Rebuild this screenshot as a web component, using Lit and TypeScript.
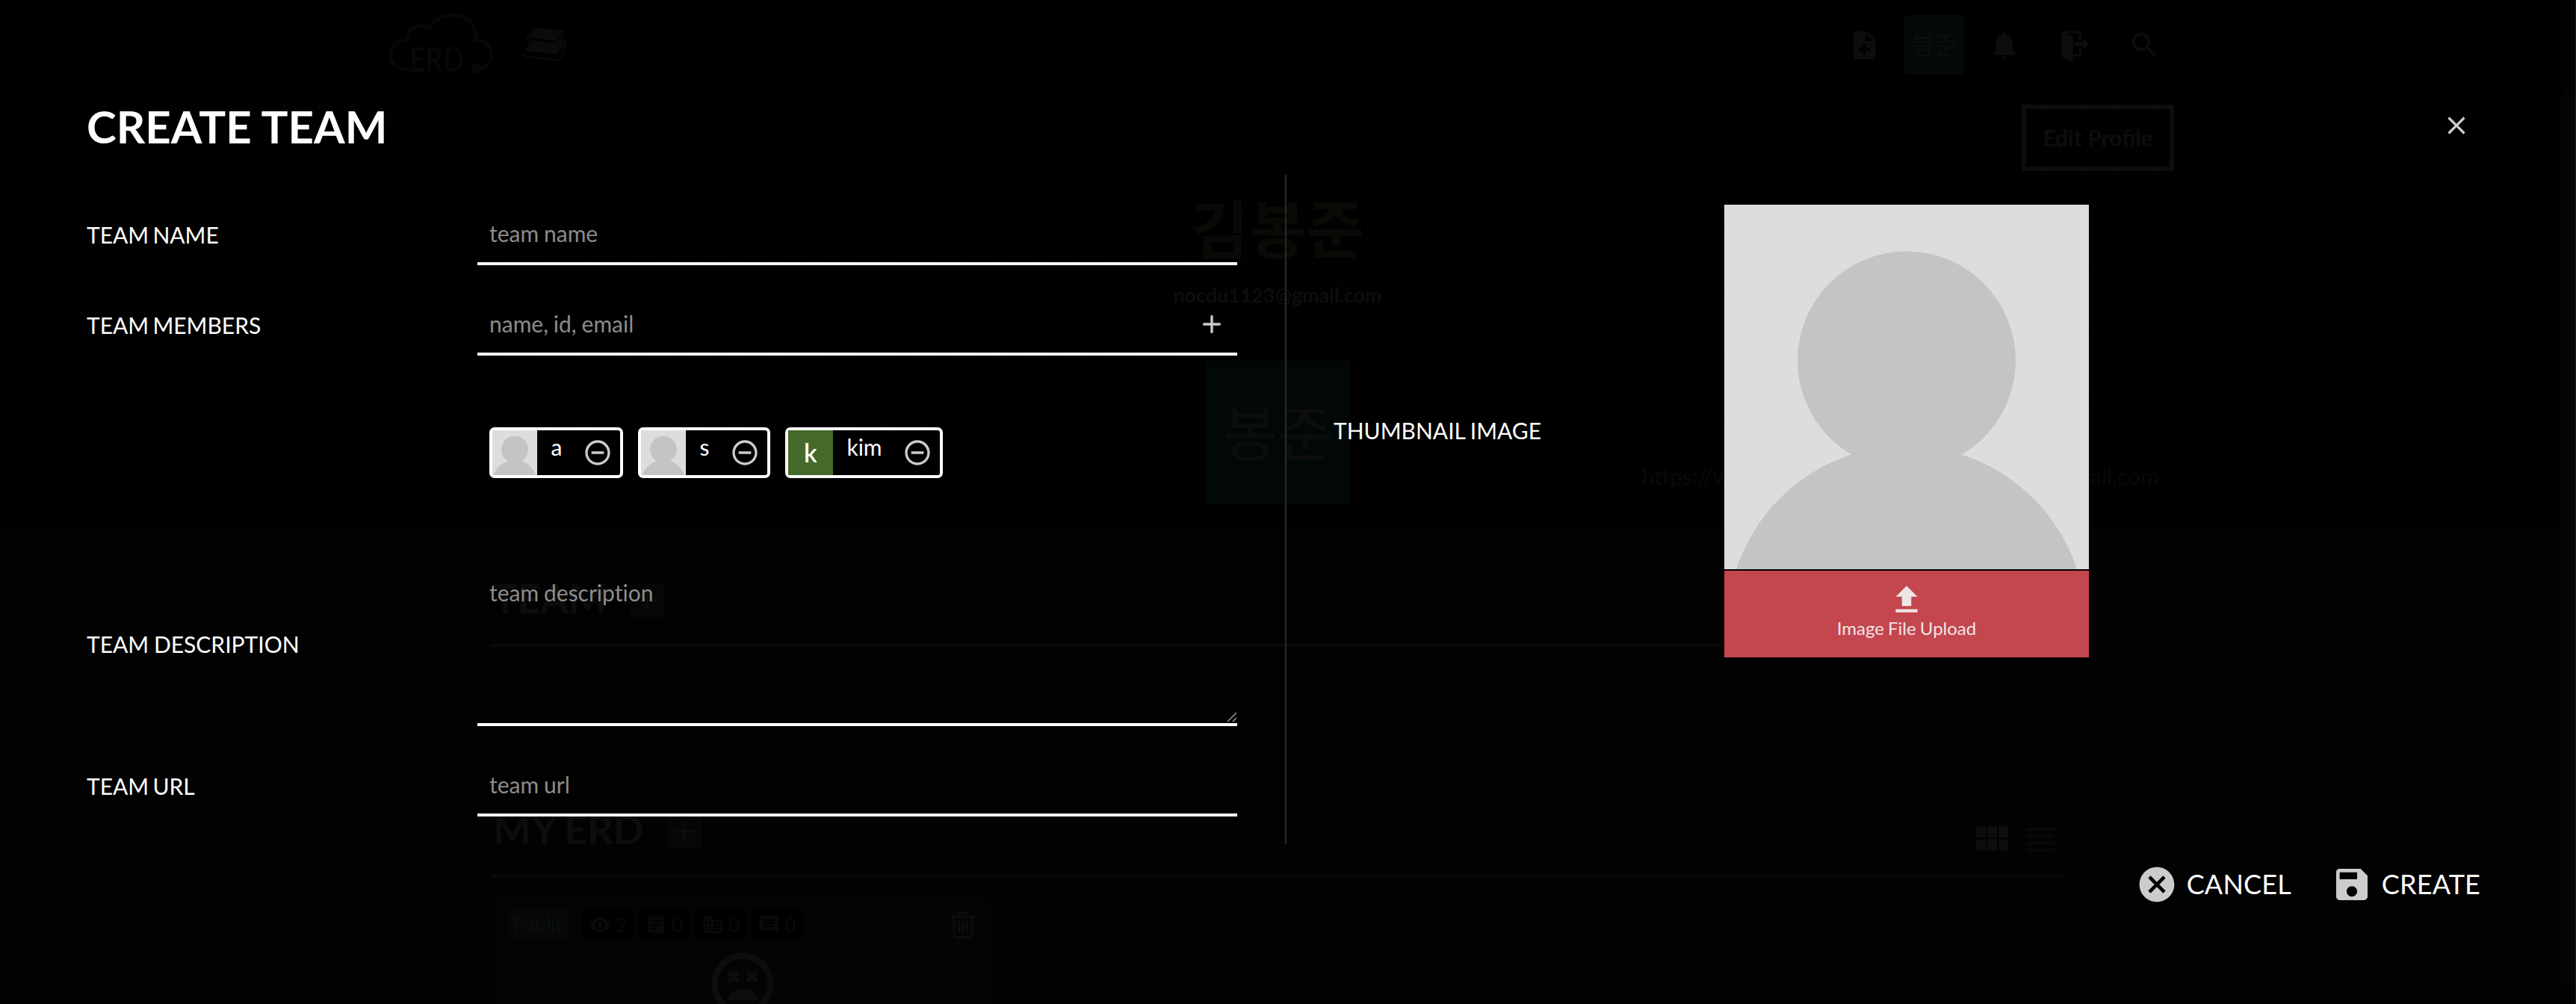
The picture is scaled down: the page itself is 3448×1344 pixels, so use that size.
import { LitElement, html, css, svg } from "lit";
import { customElement, property } from "lit/decorators.js";

const PATHS: Record<string, string> = {
  noteAdd: "M14 2H6c-1.1 0-1.99.9-1.99 2L4 20c0 1.1.89 2 1.99 2H18c1.1 0 2-.9 2-2V8l-6-6zm2 14h-3v3h-2v-3H8v-2h3v-3h2v3h3v2zm-3-7V3.5L18.5 9H13z",
  bell: "M12 22c1.1 0 2-.9 2-2h-4c0 1.1.89 2 2 2zm6-6v-5c0-3.07-1.64-5.64-4.5-6.32V4c0-.83-.67-1.5-1.5-1.5s-1.5.67-1.5 1.5v.68C7.63 5.36 6 7.92 6 11v5l-2 2v1h16v-1l-2-2z",
  exit: "M3 2h14v6h-1.7V3.600H6L11 5.500V18.500H15.300V13.500H17V20H11V24L3 20.300ZM12 9.800h6.500V7L22.300 11.200L18.500 15.400V12.500H12Z",
  search: "M15.5 14h-.79l-.28-.27C15.41 12.59 16 11.11 16 9.500 16 5.910 13.090 3 9.500 3S3 5.910 3 9.500 5.910 16 9.500 16c1.610 0 3.090-.59 4.230-1.570l.27.28v.79l5 4.990L20.490 19l-4.990-5zm-6 0C7.010 14 5 11.990 5 9.500S7.010 5 9.500 5 14 7.010 14 9.500 11.990 14 9.500 14z",
  add: "M19 13h-6v6h-2v-6H5v-2h6V5h2v6h6v2z",
  close: "M19 6.41L17.59 5 12 10.59 6.41 5 5 6.41 10.59 12 5 17.59 6.41 19 12 13.41 17.59 19 19 17.59 13.41 12z",
  minus: "M7 11v2h10v-2H7zm5-9C6.48 2 2 6.48 2 12s4.480 10 10 10 10-4.480 10-10S17.520 2 12 2zm0 18c-4.410 0-8-3.590-8-8s3.590-8 8-8 8 3.590 8 8-3.590 8-8 8z",
  cancel: "M12 2C6.470 2 2 6.470 2 12s4.470 10 10 10 10-4.470 10-10S17.530 2 12 2zm5 13.590L15.590 17 12 13.410 8.410 17 7 15.590 10.590 12 7 8.410 8.410 7 12 10.590 15.590 7 17 8.410 13.410 12 17 15.590z",
  save: "M17 3H5c-1.11 0-2 .9-2 2v14c0 1.1.89 2 2 2h14c1.1 0 2-.9 2-2V7l-4-4zm-5 16c-1.660 0-3-1.340-3-3s1.340-3 3-3 3 1.340 3 3-1.340 3-3 3zm3-10H5V5h10v4z",
  upload: "M9 16h6v-6h4l-7-7-7 7h4zm-4 2h14v2H5z",
  grid: "M4 11h5V5H4v6zm0 7h5v-6H4v6zm6 0h5v-6h-5v6zm6 0h5v-6h-5v6zm-6-7h5V5h-5v6zm6-6v6h5V5h-5z",
  list: "M4 15h16v-2H4v2zm0 4h16v-2H4v2zm0-8h16V9H4v2zm0-6v2h16V5H4z",
  eye: "M12 4.500C7 4.500 2.730 7.610 1 12c1.730 4.390 6 7.500 11 7.500s9.270-3.110 11-7.500c-1.730-4.390-6-7.500-11-7.500zM12 17c-2.760 0-5-2.240-5-5s2.240-5 5-5 5 2.240 5 5-2.240 5-5 5zm0-8c-1.660 0-3 1.340-3 3s1.340 3 3 3 3-1.340 3-3-1.340-3-3-3z",
  clipboard: "M19 3h-4.180C14.400 1.840 13.300 1 12 1c-1.300 0-2.400.84-2.820 2H5c-1.100 0-2 .9-2 2v14c0 1.100.9 2 2 2h14c1.100 0 2-.9 2-2V5c0-1.100-.9-2-2-2zm-7 0c.55 0 1 .45 1 1s-.45 1-1 1-1-.45-1-1 .45-1 1-1zm2 14H7v-2h7v2zm3-4H7v-2h10v2zm0-4H7V7h10v2z",
  building: "M12 7V3H2v18h20V7H12zM6 19H4v-2h2v2zm0-4H4v-2h2v2zm0-4H4V9h2v2zm0-4H4V5h2v2zm4 12H8v-2h2v2zm0-4H8v-2h2v2zm0-4H8V9h2v2zm0-4H8V5h2v2zm10 12h-8v-2h2v-2h-2v-2h2v-2h-2V9h8v10zm-2-8h-2v2h2v-2zm0 4h-2v2h2v-2z",
  comment: "M22 4c0-1.100-.9-2-2-2H4c-1.100 0-2 .9-2 2v12c0 1.100.9 2 2 2h14l4 4V4zm-4 10H6v-2h12v2zm0-3H6V9h12v2zm0-3H6V6h12v2z",
};

@customElement("ui-icon")
class UiIcon extends LitElement {
  @property() name = "";
  static styles = css`
    :host { display: block; flex: none; width: 40px; height: 40px; }
    .glyph { display: block; width: 100%; height: 100%; fill: currentColor; }
  `;
  render() {
    return html`<svg class="glyph" viewBox="0 0 24 24">${svg`<path d=${PATHS[this.name] ?? ""}></path>`}</svg>`;
  }
}

@customElement("ui-silhouette")
class UiSilhouette extends LitElement {
  static styles = css`
    :host { display: block; flex: none; }
    .pic { display: block; width: 100%; height: 100%; background: #dddddd; fill: #c4c4c4; }
  `;
  render() {
    return html`<svg class="pic" viewBox="0 0 488 488">
      <circle cx="244" cy="208.500" r="146"></circle><circle cx="244" cy="563" r="240"></circle>
    </svg>`;
  }
}

@customElement("profile-page")
class ProfilePage extends LitElement {
  static styles = css`
    :host { display: flex; height: 1344px; background: #020202; color: #0d0d0d; }
    .main { flex: 1; min-width: 0; }
    .nav { height: 120px; background: #000; display: flex; align-items: center; padding: 0 511px 0 520px; }
    .cloud { width: 142px; height: 84px; margin-right: 38px; color: #07070b; overflow: visible; }
    .books { width: 60px; height: 50px; color: #0b0b0b; }
    .tools { margin-left: auto; display: flex; align-items: center; }
    .tool { width: 93.75px; display: flex; justify-content: center; }
    .tool ui-icon { width: 45px; height: 45px; }
    .me { width: 80px; height: 80px; border-radius: 6px; background: #030909; display: flex; align-items: center; justify-content: center; font-size: 33px; line-height: 40px; }
    .hero { height: 584px; background: #000; display: grid; grid-template-rows: 456px 128px; }
    .stripes { background: repeating-linear-gradient(120deg, #000 0 22px, #010101 22px 43.500px); grid-area: 1 / 1; }
    .person { grid-area: 1 / 1 / 3 / 2; width: 2252px; padding: 20px 0 0 658px; box-sizing: content-box; }
    .edit { display: block; box-sizing: border-box; width: 204px; height: 89px; border: 6px solid #0d0d0d; margin-left: auto; font-weight: 700; font-size: 30px; line-height: 76px; text-align: center; }
    .center { width: 400px; margin-left: 852px; text-align: center; }
    .name { font-size: 84px; font-weight: 700; line-height: 100px; margin-top: 28px; color: #0b0906; }
    .mail { font-size: 26.800px; font-weight: 700; line-height: 36px; margin-top: 20px; }
    .mid { display: flex; align-items: flex-start; margin-top: 58px; padding-left: 944px; }
    .frame { padding: 12px; background: #010101; }
    .big { width: 192px; height: 192px; background: #020808; display: flex; align-items: center; justify-content: center; font-size: 80px; line-height: 90px; }
    .link { width: 692px; margin: 148px 0 0 380px; display: flex; justify-content: space-between; font-size: 30px; line-height: 36px; color: #090909; }
    .section { margin-left: 658px; width: 2104px; }
    .head { box-sizing: border-box; height: 104px; border-bottom: 4px solid #0b0906; display: flex; align-items: flex-start; padding-top: 7px; }
    .teams { margin-top: 58px; height: 309px; }
    .h { font-size: 54px; font-weight: 700; line-height: 64px; margin: 0 31px 0 2px; word-spacing: -2px; }
    .plus { width: 47px; height: 47px; border-radius: 6px; background: #060606; display: flex; align-items: center; justify-content: center; margin-top: 11px; }
    .plus ui-icon { width: 44px; height: 44px; }
    .views { margin: 15px 3px 0 auto; display: flex; align-items: center; gap: 7px; }
    .g { width: 61px; height: 61px; }
    .l { width: 56px; height: 56px; color: #080808; }
    .card { margin: 26px 0 0 6px; width: 661px; height: 143px; background: #040404; box-sizing: border-box; padding: 16px 14px 0 16px; overflow: hidden; }
    .bar { display: flex; align-items: center; gap: 5px; }
    .pub { width: 82px; height: 41px; border-radius: 7px; background: #050805; color: #0c0f0c; text-align: center; font-size: 26px; line-height: 40px; margin-right: 11px; }
    .stat { width: 70.500px; height: 40px; border-radius: 7px; background: #000; display: flex; align-items: center; justify-content: center; gap: 6px; font-size: 26px; color: #0a0a0a; }
    .stat ui-icon { width: 30px; height: 30px; }
    .trash { width: 44px; height: 38px; margin-left: auto; }
    .face { display: block; width: 84px; height: 84px; margin: 17px auto 0; position: relative; left: -2px; }
    .scroll { box-sizing: border-box; width: 20px; background: #020202; border-right: 1px solid #1c1c1c; }
    .thumb { height: 1206px; margin-top: 120px; border-radius: 10px; background: #040404; }
  `;
  render() {
    return html`
      <div class="main">
        <div class="nav">
          <svg class="cloud" viewBox="0 0 142 84" fill="none" stroke="currentColor" stroke-width="5">
            <path d="M48 75H24C11 75 2.500 66 2.500 56C2.500 43 12 35.500 25 35.500C25 20 38 12 55 19.500C64 3 84 -1 99 5C112 10 118 21 117 35.500C130 35.500 138 45 138 56C138 67 130 73 119 75"></path>
            <circle cx="118" cy="74" r="7" fill="currentColor" stroke="none"></circle>
            <text x="28" y="78" font-size="45" font-weight="700" textLength="73" lengthAdjust="spacingAndGlyphs" fill="currentColor" stroke="none">ERD</text>
          </svg>
          <svg class="books" viewBox="0 0 60 50">
            <path fill="currentColor" d="M19 2L54 6L44 20L3 15ZM6 27L3 33L45 38L54 28V22L46 28L8 23ZM9 20L45 24L52 17V23L45 28L9 24Z"></path>
            <path fill="none" stroke="currentColor" stroke-width="2" d="M3 18L43 24L54 12V6M2 37V40L48 46L56 30V19L52 21"></path>
          </svg>
          <div class="tools">
            <div class="tool"><ui-icon name="noteAdd"></ui-icon></div>
            <div class="tool"><div class="me">봉준</div></div>
            <div class="tool"><ui-icon name="bell"></ui-icon></div>
            <div class="tool"><ui-icon name="exit"></ui-icon></div>
            <div class="tool"><ui-icon name="search"></ui-icon></div>
          </div>
        </div>
        <div class="hero">
          <div class="stripes"></div>
          <div class="person">
            <div class="edit">Edit Profile</div>
            <div class="center">
              <div class="name">김봉준</div>
              <div class="mail">nocdu1123@gmail.com</div>
            </div>
            <div class="mid">
              <div class="frame"><div class="big">봉준</div></div>
              <div class="link"><span>https://w</span><span>ail.com</span></div>
            </div>
          </div>
        </div>
        <div class="section teams">
          <div class="head"><div class="h">TEAM</div><div class="plus"><ui-icon name="add"></ui-icon></div></div>
        </div>
        <div class="section">
          <div class="head">
            <div class="h">MY ERD</div><div class="plus"><ui-icon name="add"></ui-icon></div>
            <div class="views"><ui-icon class="g" name="grid"></ui-icon><ui-icon class="l" name="list"></ui-icon></div>
          </div>
          <div class="card">
            <div class="bar">
              <div class="pub">Public</div>
              <div class="stat"><ui-icon name="eye"></ui-icon>2</div>
              <div class="stat"><ui-icon name="clipboard"></ui-icon>0</div>
              <div class="stat"><ui-icon name="building"></ui-icon>0</div>
              <div class="stat"><ui-icon name="comment"></ui-icon>0</div>
              <svg class="trash" viewBox="0 0 44 38" fill="none" stroke="currentColor" stroke-width="3">
                <path d="M6 8H38M15 8L17 3H27L29 8M10 8V31Q10 36 15 36H29Q34 36 34 31V8M17 14V30M22 14V30M27 14V30"></path>
              </svg>
            </div>
            <svg class="face" viewBox="0 0 84 84" fill="none" stroke="currentColor">
              <circle cx="42" cy="42" r="37.500" stroke-width="8"></circle>
              <path stroke-width="6" d="M23 26L36 39M36 26L23 39M48 26L61 39M61 26L48 39"></path>
              <path fill="currentColor" stroke="none" d="M21 64C23 44 61 44 63 64Z"></path>
            </svg>
          </div>
        </div>
      </div>
      <div class="scroll"><div class="thumb"></div></div>`;
  }
}

@customElement("app-root")
class AppRoot extends LitElement {
  static styles = css`
    :host { display: block; position: relative; width: 3448px; height: 1344px; overflow: hidden; background: #000; font-family: Lato, "Noto Sans CJK KR", sans-serif; font-size: 30px; color: #fff; }
    .modal { position: absolute; inset: 0; display: flex; flex-direction: column; }
    .header { box-sizing: border-box; height: 234px; padding: 134px 140px 0 116px; display: flex; align-items: flex-start; }
    .title { margin: 0; font-size: 60px; line-height: 70px; font-weight: 700; }
    .x { margin: 14px 0 0 auto; color: #ccc; }
    .body { height: 896px; display: flex; }
    .form { flex: none; box-sizing: border-box; width: 1720px; padding: 41px 64px 0 116px; display: flex; flex-direction: column; }
    .row { display: grid; grid-template-columns: 523px 1fr; align-items: center; margin-bottom: 41px; }
    .label { line-height: 36px; white-space: nowrap; word-spacing: -2.500px; padding-bottom: 3px; }
    .label.even { word-spacing: -1px; }
    .field { position: relative; display: flex; align-items: center; box-sizing: border-box; height: 80px; border-bottom: 4px solid #fff; padding: 0 14px 0 16px; }
    .field.tall { height: 218px; padding: 21px 16px 0; align-items: flex-start; }
    .input { flex: 1; min-width: 0; border: 0; outline: 0; padding: 0; margin: 0 0 2px; background: none; color: #fff; font: inherit; line-height: 36px; height: 36px; resize: none; overflow: hidden; word-spacing: -.8px; font-variant-ligatures: none; }
    .input::placeholder { color: #8c8c8c; opacity: 1; }
    .tall .input { height: 150px; }
    .icon { color: #ccc; }
    .grip { position: absolute; right: 0; bottom: 1px; width: 14px; height: 14px; }
    .chips { display: flex; gap: 20px; margin: 55px 0 114px 539px; }
    .chip { display: flex; border: 4px solid #fff; border-radius: 7px; background: #000; padding-right: 10px; height: 60px; }
    .pic { width: 60px; height: 60px; }
    .initial { width: 60px; height: 60px; background: #44692b; text-align: center; font-size: 34px; line-height: 59px; font-weight: 600; }
    .who { padding: 0 27.500px 0 18.500px; line-height: 45px; }
    .chip .icon { margin-top: 10px; }
    .side { border-left: 2px solid #2b2b2b; display: grid; grid-template-columns: 523px 488px; align-items: center; align-content: start; padding: 40px 0 0 63px; }
    .thumb { display: flex; flex-direction: column; gap: 2px; }
    .photo { width: 488px; height: 488px; }
    .upload { height: 116px; background: #c4464f; color: #f0e5e6; display: flex; flex-direction: column; align-items: center; box-sizing: border-box; padding-top: 14px; font-size: 24px; line-height: 26px; word-spacing: -1px; }
    .upload ui-icon { width: 50px; height: 50px; }
    .footer { display: flex; justify-content: flex-end; gap: 53px; padding: 26px 128px 0 0; font-size: 36px; line-height: 54px; letter-spacing: .15px; }
    .action { display: flex; gap: 12px; }
    .action .icon { width: 56px; height: 56px; }
  `;
  private members = [
    { name: "a", initial: "" },
    { name: "s", initial: "" },
    { name: "kim", initial: "k" },
  ];
  render() {
    return html`
      <profile-page></profile-page>
      <div class="modal">
        <div class="header"><h1 class="title">CREATE TEAM</h1><ui-icon class="x" name="close"></ui-icon></div>
        <div class="body">
          <div class="form">
            <div class="row"><div class="label">TEAM NAME</div><div class="field"><input class="input" placeholder="team name"></div></div>
            <div class="row"><div class="label">TEAM MEMBERS</div><div class="field"><input class="input" placeholder="name, id, email"><ui-icon class="icon" name="add"></ui-icon></div></div>
            <div class="chips">
              ${this.members.map((m) => html`<div class="chip">
                ${m.initial ? html`<div class="initial">${m.initial}</div>` : html`<ui-silhouette class="pic"></ui-silhouette>`}
                <div class="who">${m.name}</div><ui-icon class="icon" name="minus"></ui-icon>
              </div>`)}
            </div>
            <div class="row"><div class="label even">TEAM DESCRIPTION</div><div class="field tall"><textarea class="input" placeholder="team description"></textarea>
              <svg class="grip" viewBox="0 0 14 14" stroke="#9a9a9a" stroke-width="1.500"><path d="M1 13L13 1M8 13L13 8"></path></svg></div></div>
            <div class="row"><div class="label">TEAM URL</div><div class="field"><input class="input" placeholder="team url"></div></div>
          </div>
          <div class="side">
            <div class="label even">THUMBNAIL IMAGE</div>
            <div class="thumb">
              <ui-silhouette class="photo"></ui-silhouette>
              <div class="upload"><ui-icon name="upload"></ui-icon>Image File Upload</div>
            </div>
          </div>
        </div>
        <div class="footer">
          <div class="action"><ui-icon class="icon" name="cancel"></ui-icon>CANCEL</div>
          <div class="action"><ui-icon class="icon" name="save"></ui-icon>CREATE</div>
        </div>
      </div>`;
  }
}
